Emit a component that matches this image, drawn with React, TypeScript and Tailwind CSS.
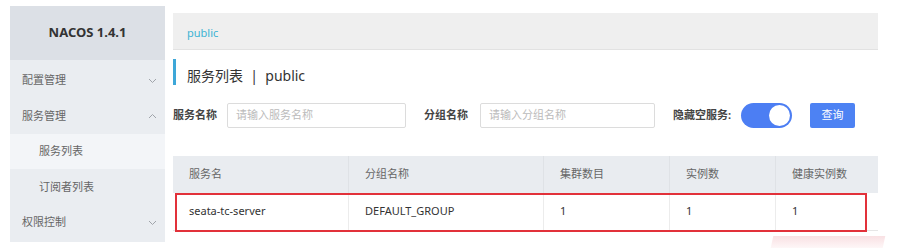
import React from "react";

const font = { fontFamily: '"Noto Sans", "Noto Sans CJK SC", sans-serif' };

function Chevron({ up }: { up?: boolean }) {
  return (
    <svg width="9" height="6" viewBox="0 0 9 6" className="text-[#a0a4aa]">
      {up ? (
        <path d="M1 5 L4.5 1.5 L8 5" fill="none" stroke="currentColor" strokeWidth="1" />
      ) : (
        <path d="M1 1 L4.5 4.5 L8 1" fill="none" stroke="currentColor" strokeWidth="1" />
      )}
    </svg>
  );
}

export default function App() {
  const cols = [
    { w: "w-[175px]", h: "服务名", v: "seata-tc-server" },
    { w: "w-[195px]", h: "分组名称", v: "DEFAULT_GROUP" },
    { w: "w-[126px]", h: "集群数目", v: "1" },
    { w: "w-[106px]", h: "实例数", v: "1" },
    { w: "w-[103px]", h: "健康实例数", v: "1" },
  ];
  return (
    <div className="relative w-[897px] h-[249px] bg-white flex pt-[6px] pl-[10px] overflow-hidden" style={font}>
      {/* Sidebar */}
      <div className="w-[155px] h-[236px] bg-[#eaedf1] flex flex-col">
        <div className="h-[54px] bg-[#dce0e6] flex items-center justify-center text-[13px] font-bold text-[#333]">
          NACOS 1.4.1
        </div>
        <div className="h-[3px]" />
        <div className="h-[35px] flex items-center justify-between pl-[12px] pr-[8px] text-[11px] text-[#666]">
          <span>配置管理</span>
          <Chevron />
        </div>
        <div className="h-[36px] flex items-center justify-between pl-[12px] pr-[8px] text-[11px] text-[#666]">
          <span>服务管理</span>
          <Chevron up />
        </div>
        <div className="h-[35px] flex items-center pl-[29px] text-[11px] text-[#666] bg-[#f3f5f8]">
          服务列表
        </div>
        <div className="h-[36px] flex items-center pl-[29px] text-[11px] text-[#666]">
          订阅者列表
        </div>
        <div className="h-[35px] flex items-center justify-between pl-[12px] pr-[8px] text-[11px] text-[#666]">
          <span>权限控制</span>
          <Chevron />
        </div>
      </div>

      {/* Main */}
      <div className="ml-[8px] w-[705px] pt-[7px] flex flex-col">
        <div className="h-[37px] bg-[#efefef] border-b border-[#e2e2e2] flex items-center pl-[14px] pt-[5px] text-[11px] text-[#3db3d3]">
          public
        </div>
        <div className="mt-[9px] h-[26px] border-l-[3px] border-[#3ea7d8] flex items-center pl-[11px] pt-[6px] text-[14px] text-[#333]">
          服务列表&nbsp;&nbsp;|&nbsp;&nbsp;public
        </div>
        <div className="mt-[18px] h-[25px] flex items-center text-[11px]">
          <span className="w-[54px] font-bold text-[#444]">服务名称</span>
          <div className="w-[179px] h-[25px] border border-[#dcdcdc] rounded-[2px] flex items-center pl-[8px] text-[#bbb]">
            请输入服务名称
          </div>
          <span className="ml-[18px] w-[56px] font-bold text-[#444]">分组名称</span>
          <div className="w-[175px] h-[25px] border border-[#dcdcdc] rounded-[2px] flex items-center pl-[8px] text-[#bbb]">
            请输入分组名称
          </div>
          <span className="ml-[18px] w-[68px] font-bold text-[#444]">隐藏空服务:</span>
          <div className="w-[51px] h-[25px] rounded-full bg-[#4c7ef3] flex items-center justify-end pr-[2px]">
            <div className="w-[21px] h-[21px] rounded-full bg-white" />
          </div>
          <div className="ml-[18px] w-[45px] h-[25px] rounded-[2px] bg-[#4d82f3] text-white flex items-center justify-center">
            查询
          </div>
        </div>
        <div className="mt-[28px] relative">
          <div className="flex h-[37px] bg-[#e9ecf0] text-[11px] text-[#666]">
            {cols.map((c, i) => (
              <div key={i} className={`${c.w} flex items-center pl-[16px] ${i > 0 ? "border-l border-[#dfe2e6]" : ""}`}>
                {c.h}
              </div>
            ))}
          </div>
          <div className="flex h-[38px] bg-white text-[11px] text-[#333] border-b border-[#e6e6e6]">
            {cols.map((c, i) => (
              <div key={i} className={`${c.w} flex items-center pl-[16px] ${i > 0 ? "border-l border-[#ececec]" : ""}`}>
                {c.v}
              </div>
            ))}
          </div>
          <div className="absolute left-[2px] top-[37px] w-[692px] h-[39px] border-2 border-[#e2313a]" />
        </div>
      </div>

      {/* pink watermark smudge */}
      <div className="absolute left-[772px] top-[236px] w-[112px] h-[12px] bg-gradient-to-b from-[#f6d3d7] to-[#fdf3f4] opacity-70 -skew-x-12" />
    </div>
  );
}
